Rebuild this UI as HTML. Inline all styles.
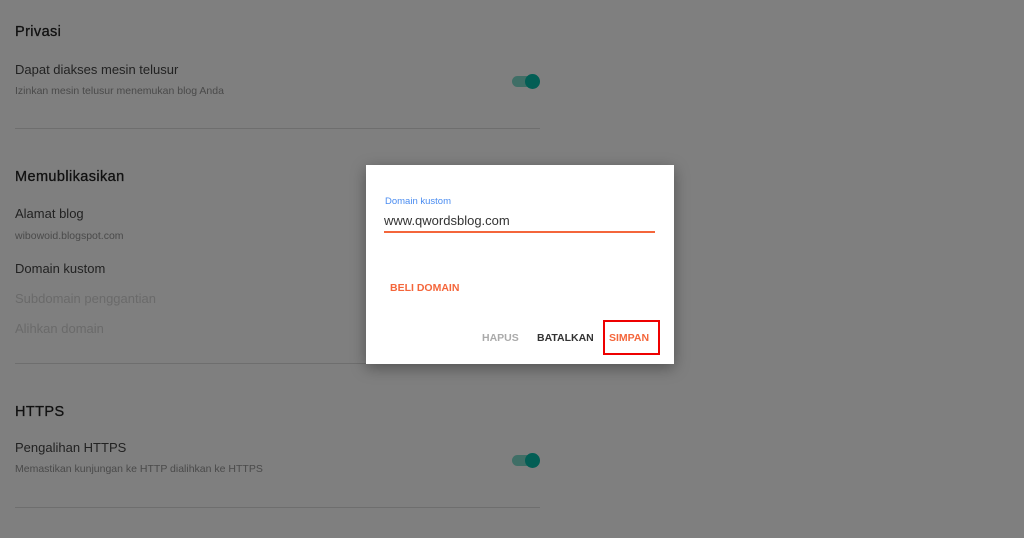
<!DOCTYPE html>
<html><head><style>
body{margin:0;width:1024px;height:538px;background:#7f7f7f;font-family:"Liberation Sans",sans-serif;position:relative;overflow:hidden}
.t{position:absolute;white-space:nowrap}
.h{font-size:14.5px;color:#111;font-weight:normal;letter-spacing:.4px;-webkit-text-stroke:.3px #111}
.l{font-size:13px;color:#222}
.s{font-size:10.5px;color:#4a4a4a}
.g{font-size:13px;color:#6a6a6a}
.hr{position:absolute;left:15px;width:525px;height:1px;background:#6e6e6e}
.tg{position:absolute;width:20px;height:11px;border-radius:6px;background:#3f6e66}
.tk{position:absolute;width:15px;height:15px;border-radius:50%;background:#035e55}
.d{position:absolute;left:366px;top:165px;width:308px;height:199px;background:#fff;box-shadow:0 4px 14px rgba(0,0,0,.35)}
.b{position:absolute;font-size:10.5px;font-weight:bold}
</style></head><body>
<div class="t h" style="left:15px;top:24px">Privasi</div>
<div class="t l" style="left:15px;top:62px">Dapat diakses mesin telusur</div>
<div class="t s" style="left:15px;top:85px">Izinkan mesin telusur menemukan blog Anda</div>
<div class="tg" style="left:512px;top:76px"></div><div class="tk" style="left:525px;top:74px"></div>
<div class="hr" style="top:128px"></div>
<div class="t h" style="left:15px;top:169px">Memublikasikan</div>
<div class="t l" style="left:15px;top:206px">Alamat blog</div>
<div class="t s" style="left:15px;top:230px">wibowoid.blogspot.com</div>
<div class="t l" style="left:15px;top:261px">Domain kustom</div>
<div class="t g" style="left:15px;top:291px">Subdomain penggantian</div>
<div class="t g" style="left:15px;top:321px">Alihkan domain</div>
<div class="hr" style="top:363px"></div>
<div class="t h" style="left:15px;top:404px">HTTPS</div>
<div class="t l" style="left:15px;top:440px">Pengalihan HTTPS</div>
<div class="t s" style="left:15px;top:463px">Memastikan kunjungan ke HTTP dialihkan ke HTTPS</div>
<div class="tg" style="left:512px;top:455px"></div><div class="tk" style="left:525px;top:453px"></div>
<div class="hr" style="top:507px"></div>
<div class="d">
<div class="t" style="left:19px;top:31px;font-size:9.5px;color:#4a8cf0">Domain kustom</div>
<div class="t" style="left:18px;top:48px;font-size:13px;color:#333">www.qwordsblog.com</div>
<div style="position:absolute;left:18px;top:66px;width:271px;height:2px;background:#f4663b"></div>
<div class="b" style="left:24px;top:117px;color:#f4663b">BELI DOMAIN</div>
<div class="b" style="left:116px;top:167px;color:#aaa">HAPUS</div>
<div class="b" style="left:171px;top:167px;color:#333">BATALKAN</div>
<div style="position:absolute;left:237px;top:155px;width:57px;height:35px;border:2px solid #e00;box-sizing:border-box"></div>
<div class="b" style="left:243px;top:167px;color:#f4663b">SIMPAN</div>
</div>
</body></html>
